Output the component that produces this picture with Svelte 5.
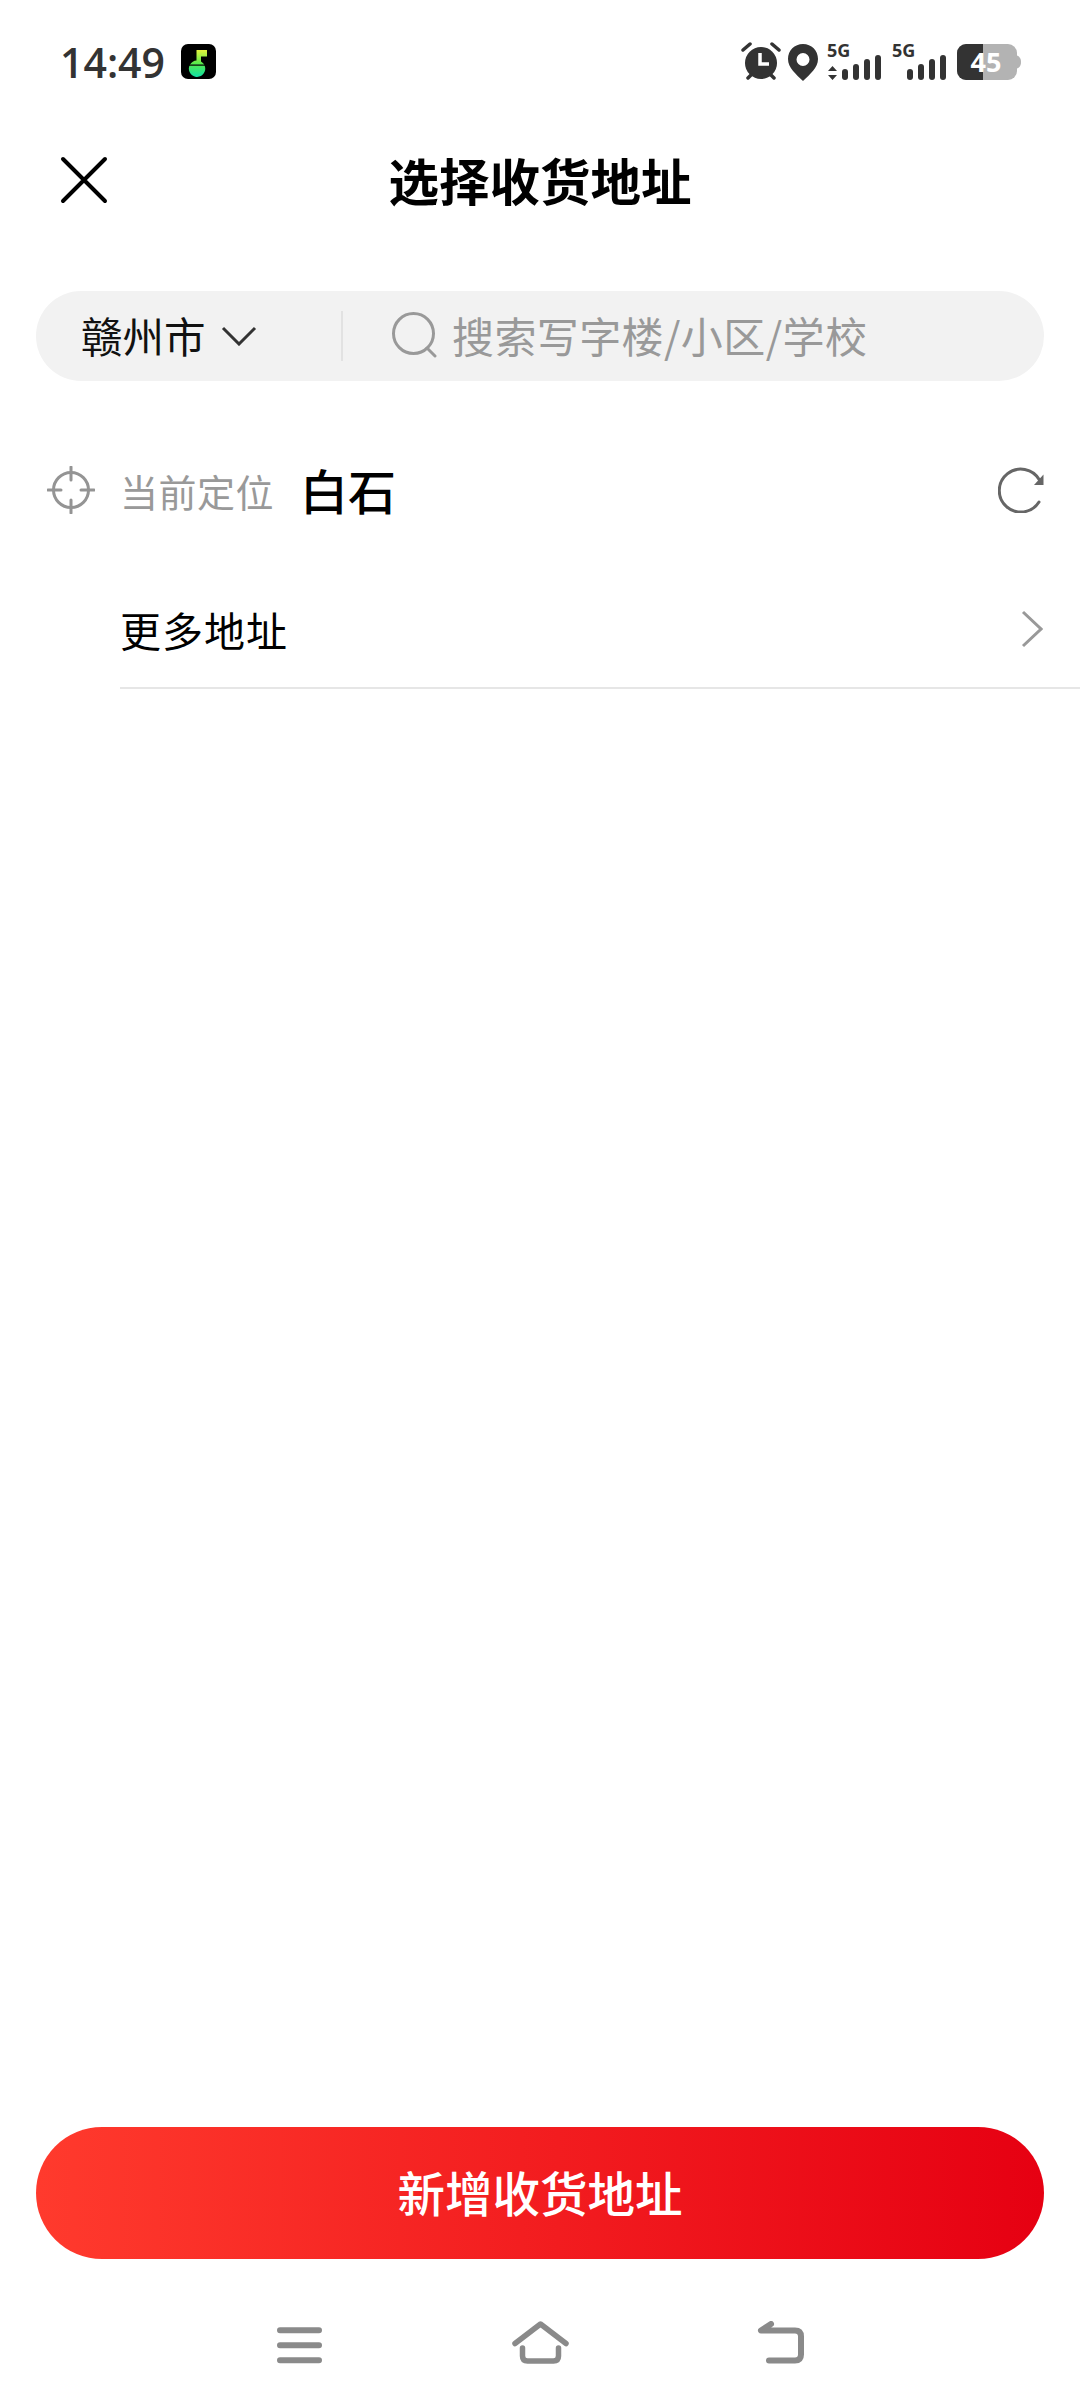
<script>
  const city = '赣州市';
  const placeholder = '搜索写字楼/小区/学校';
</script>

<div class="page">
  <!-- status bar -->
  <div class="status">
    <span class="time">14:49</span>
    <svg class="app-icon" width="36" height="36" viewBox="0 0 36 36">
      <defs>
        <linearGradient id="note" x1="0" y1="0" x2="0" y2="1">
          <stop offset="0" stop-color="#e4f23c" />
          <stop offset="0.5" stop-color="#58ea4c" />
          <stop offset="1" stop-color="#10e0a4" />
        </linearGradient>
      </defs>
      <rect width="35" height="35" rx="7" fill="#000" />
      <path d="M15.500 6h10.500v6.500h-6v5a8.200 8.200 0 1 1-4.500-1z" fill="url(#note)" />
      <rect x="7" y="20.500" width="21" height="1.200" fill="#000" />
    </svg>
    <div class="grow"></div>
    <svg class="status-right" width="282" height="50" viewBox="0 -10 282 50">
      <g fill="#333">
        <!-- alarm -->
        <circle cx="20" cy="21" r="16" />
        <path d="M2 8l7-6M38 8l-7-6M7 36l3-3M33 36l-3-3" stroke="#333" stroke-width="3.500" stroke-linecap="round" fill="none" />
        <path d="M19 11v11h9" stroke="#fff" stroke-width="3.500" fill="none" />
        <!-- pin -->
        <path fill-rule="evenodd" d="M62 2c8.500 0 15 6.500 15 15 0 9-8 15-15 22-7-7-15-13-15-22 0-8.500 6.500-15 15-15zm0 9a6.500 6.500 0 1 0 0 13 6.500 6.500 0 0 0 0-13z" />
        <!-- sim 1 -->
        <text x="86" y="15" class="net">5G</text>
        <path d="M91.500 24l4.500 5h-9zM91.500 38l4.500-5h-9z" />
        <rect x="101" y="27" width="6" height="11" rx="3" />
        <rect x="112" y="22" width="6" height="16" rx="3" />
        <rect x="123" y="17" width="6" height="21" rx="3" />
        <rect x="134" y="13" width="6" height="25" rx="3" />
        <!-- sim 2 -->
        <text x="151" y="15" class="net">5G</text>
        <rect x="166" y="27" width="6" height="11" rx="3" />
        <rect x="177" y="22" width="6" height="16" rx="3" />
        <rect x="188" y="17" width="6" height="21" rx="3" />
        <rect x="199" y="13" width="6" height="25" rx="3" />
      </g>
      <!-- battery -->
      <rect x="216" y="2" width="60" height="36" rx="9" fill="#b3b3b3" />
      <path d="M225 2h17v36h-17a9 9 0 0 1-9-9V11a9 9 0 0 1 9-9z" fill="#333" />
      <path d="M275 13c3 1 5 3 5 7s-2 6-5 7z" fill="#b3b3b3" />
      <text x="245" y="30" class="batt" text-anchor="middle">45</text>
    </svg>
  </div>

  <!-- title bar -->
  <div class="titlebar">
    <svg width="48" height="48" viewBox="0 0 48 48">
      <path d="M3 3l42 42M45 3L3 45" stroke="#000" stroke-width="4" stroke-linecap="round" fill="none" />
    </svg>
    <div class="title">选择收货地址</div>
    <div></div>
  </div>

  <!-- search -->
  <div class="search">
    <span class="city">{city}</span>
    <svg class="chev-down" width="36" height="20" viewBox="0 0 36 20">
      <path d="M2 2l16 16L34 2" stroke="#333" stroke-width="3" fill="none" />
    </svg>
    <div class="divider"></div>
    <svg class="search-icon" width="46" height="46" viewBox="0 0 46 46">
      <circle cx="21.500" cy="21.500" r="20" stroke="#999" stroke-width="3" fill="none" />
      <path d="M35 36l8 8" stroke="#999" stroke-width="3" stroke-linecap="round" fill="none" />
    </svg>
    <span class="placeholder">{placeholder}</span>
  </div>

  <!-- current location -->
  <div class="location">
    <svg class="target" width="48" height="48" viewBox="0 0 48 48">
      <g stroke="#949494" stroke-width="3" fill="none" stroke-linecap="round">
        <circle cx="24" cy="24" r="17.500" />
        <path d="M24 1v13M24 34v13M1 24h13M34 24h13" />
      </g>
    </svg>
    <span class="loc-label">当前定位</span>
    <span class="loc-name">白石</span>
    <div class="grow"></div>
    <svg width="46" height="46" viewBox="0 0 46 46">
      <path d="M41.500 13A21.500 21.500 0 1 0 41 35" stroke="#666" stroke-width="3" fill="none" stroke-linecap="round" />
      <path d="M45.500 7.500V18H36z" fill="#666" />
    </svg>
  </div>

  <!-- more addresses -->
  <div class="more">
    <span>更多地址</span>
    <svg width="22" height="38" viewBox="0 0 22 38">
      <path d="M2 2l18 17L2 36" stroke="#999" stroke-width="3" fill="none" />
    </svg>
  </div>

  <div class="grow"></div>

  <button class="add">新增收货地址</button>

  <!-- android nav -->
  <div class="nav">
    <div class="nav-cell">
      <svg width="45" height="37" viewBox="0 0 45 37">
        <path d="M3 3.300h39M3 18.300h39M3 33.300h39" stroke="#8a8a8a" stroke-width="6" stroke-linecap="round" fill="none" />
      </svg>
    </div>
    <div class="nav-cell">
      <svg width="57" height="43" viewBox="0 0 57 43">
        <path d="M3 22.500L28.500 3 54 22.500" stroke="#8a8a8a" stroke-width="5.500" stroke-linecap="round" stroke-linejoin="round" fill="none" />
        <path d="M10.500 27v8q0 5 5 5h26q5 0 5-5v-8" stroke="#8a8a8a" stroke-width="5.500" stroke-linecap="round" fill="none" />
      </svg>
    </div>
    <div class="nav-cell">
      <svg width="48" height="43" viewBox="0 0 48 43">
        <path d="M14 3L4 9.500h34q6 0 6 6v18q0 6-6 6H12" stroke="#8a8a8a" stroke-width="6" stroke-linecap="round" stroke-linejoin="round" fill="none" />
      </svg>
    </div>
  </div>
</div>

<style>
  :global(body) {
    margin: 0;
    background: #fff;
  }

  .page {
    width: 1080px;
    height: 2408px;
    display: flex;
    flex-direction: column;
    font-family: "Noto Sans CJK SC", "Noto Sans", sans-serif;
    color: #000;
    overflow: hidden;
  }

  .grow {
    flex: 1;
  }

  .status {
    height: 122px;
    box-sizing: border-box;
    padding: 32px 57px 0 60px;
    display: flex;
    align-items: flex-start;
  }

  .time {
    font-family: "Open Sans", sans-serif;
    font-size: 41px;
    font-weight: 600;
    line-height: 40px;
    color: #333;
    width: 121px;
    margin-top: 10px;
  }

  .app-icon {
    margin-top: 12px;
  }

  .net {
    font-family: "Open Sans", sans-serif;
    font-size: 18px;
    font-weight: 700;
  }

  .batt {
    font-family: "Open Sans", sans-serif;
    font-size: 27px;
    font-weight: 700;
    fill: #fff;
  }

  .titlebar {
    height: 116px;
    box-sizing: border-box;
    padding: 0 60px;
    display: grid;
    grid-template-columns: 1fr auto 1fr;
    align-items: center;
  }

  .title {
    font-size: 50.500px;
    font-weight: 700;
    line-height: 60px;
    margin-bottom: 3px;
  }

  .search {
    margin: 53px 36px 0;
    height: 90px;
    border-radius: 45px;
    background: #f2f2f2;
    display: flex;
    align-items: center;
    padding-left: 45px;
  }

  .city {
    font-size: 41.500px;
    color: #111;
    width: 140px;
    margin-bottom: 3px;
  }

  .chev-down {
    flex: none;
  }

  .divider {
    width: 2px;
    height: 50px;
    background: #e2e2e2;
    margin: 0 49px 0 84px;
  }

  .search-icon {
    flex: none;
    margin-bottom: 2px;
  }

  .placeholder {
    margin-left: 14px;
    margin-bottom: 3px;
    font-size: 42px;
    letter-spacing: 0.400px;
    color: #999;
    white-space: nowrap;
  }

  .location {
    margin-top: 64px;
    height: 90px;
    box-sizing: border-box;
    padding: 0 36px 0 47px;
    display: flex;
    align-items: center;
  }

  .target {
    flex: none;
  }

  .loc-label {
    margin-left: 25px;
    font-size: 38px;
    letter-spacing: 0.500px;
    color: #999;
  }

  .loc-name {
    margin: 0 0 2px 26px;
    font-size: 48px;
    font-weight: 500;
  }

  .more {
    margin: 37px 0 0 120px;
    height: 117px;
    box-sizing: border-box;
    border-bottom: 2px solid #e6e6e6;
    padding: 0 37px 2px 0;
    display: flex;
    align-items: center;
    justify-content: space-between;
    font-size: 41px;
    letter-spacing: 1px;
    color: #000;
  }

  .add {
    margin: 0 36px;
    height: 132px;
    flex: none;
    border: none;
    border-radius: 66px;
    padding: 0 0 3px;
    background: linear-gradient(90deg, #ff3a2d, #e60012);
    color: #fff;
    font-family: inherit;
    font-size: 47.500px;
    font-weight: 500;
  }

  .nav {
    height: 149px;
    flex: none;
    box-sizing: border-box;
    padding-bottom: 44px;
    display: flex;
    justify-content: center;
    align-items: flex-end;
  }

  .nav-cell {
    width: 240.500px;
    display: flex;
    justify-content: center;
  }

  .nav-cell svg {
    display: block;
  }
</style>
